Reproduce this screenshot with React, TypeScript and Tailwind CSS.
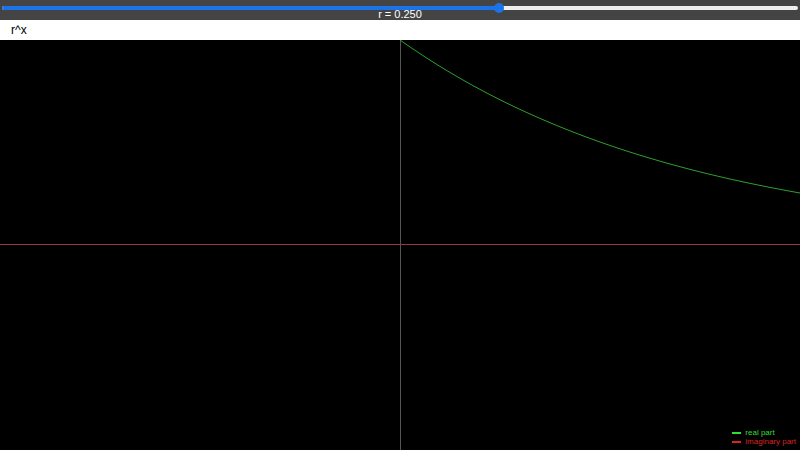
import React from "react";

export default function App() {
  const pts: string[] = [];
  for (let px = 400; px <= 800; px += 5) {
    const t = (px - 400) / 400;
    pts.push(`${px},${(204 - 204 * Math.pow(0.25, t)).toFixed(2)}`);
  }
  return (
    <div className="w-[800px] h-[450px] flex flex-col bg-black" style={{ fontFamily: "'Liberation Sans', Arial, sans-serif" }}>
      <div className="h-[20px] bg-[#444444] relative shrink-0">
        <div className="absolute left-[2px] right-[2px] top-[6px] h-[4px] rounded-full bg-[#efefef]">
          <div className="h-full w-[498px] rounded-full bg-[#1a73e8]" />
        </div>
        <div className="absolute left-[494px] top-[3px] w-[10px] h-[10px] rounded-full bg-[#1a73e8]" />
        <div className="absolute left-0 right-0 top-[8px] text-center text-white text-[11px] leading-[13px]">r = 0.250</div>
      </div>
      <div className="h-[20px] bg-white shrink-0 px-[11px] text-[12px] leading-[20px] text-black">r^x</div>
      <div className="flex-1 relative">
        <svg width="800" height="410" className="absolute inset-0">
          <line x1="400.5" y1="0" x2="400.5" y2="410" stroke="#555" strokeWidth="1" />
          <line x1="0" y1="204.5" x2="800" y2="204.5" stroke="#8e3a48" strokeWidth="1" />
          <polyline points={pts.join(" ")} fill="none" stroke="#2ea02e" strokeWidth="1" />
        </svg>
        <div className="absolute right-[4px] bottom-[4px] text-[8px] leading-[9px]">
          <div className="flex items-center gap-[4px] text-[#33dd33]"><span className="w-[9px] h-[2px] bg-[#33dd33]" />real part</div>
          <div className="flex items-center gap-[4px] text-[#dd2222]"><span className="w-[9px] h-[2px] bg-[#dd2222]" />imaginary part</div>
        </div>
      </div>
    </div>
  );
}
